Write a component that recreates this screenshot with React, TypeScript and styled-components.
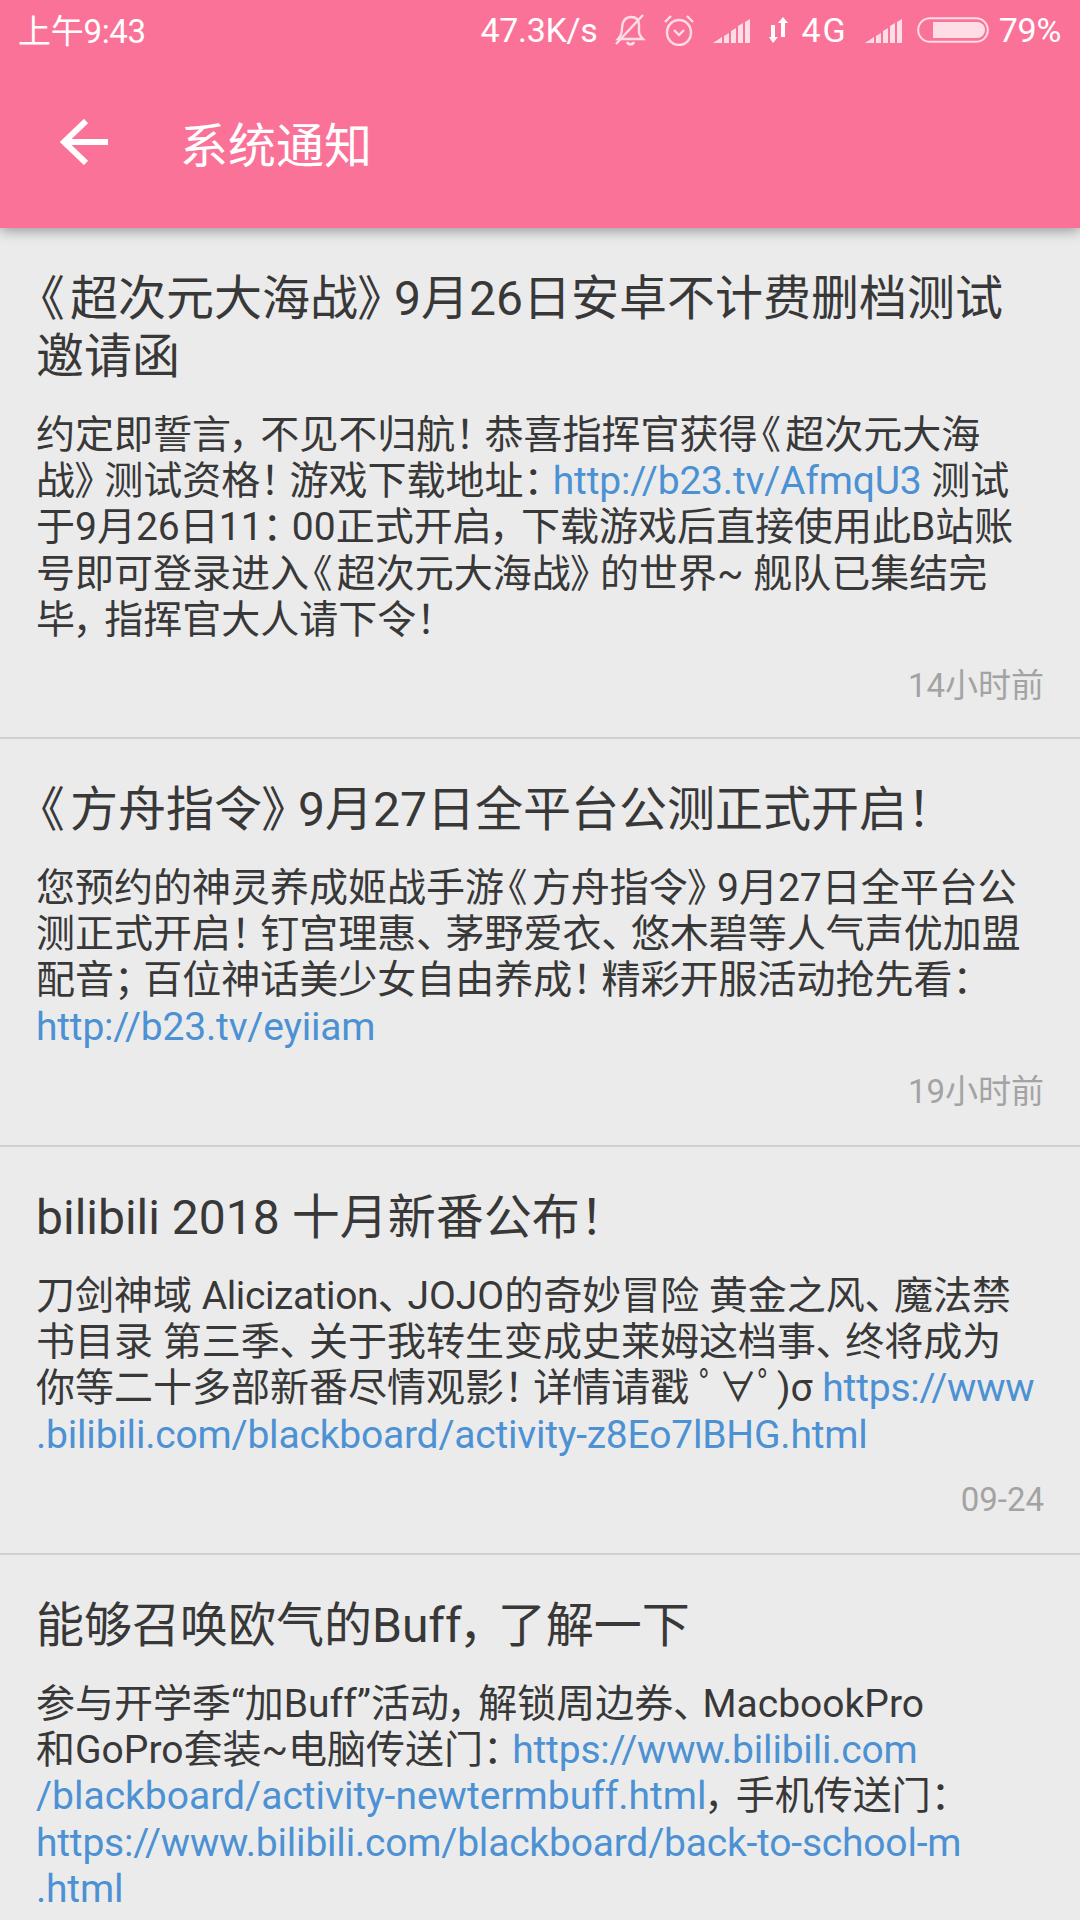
import React from 'react';
import styled, { createGlobalStyle } from 'styled-components';

const GlobalStyle = createGlobalStyle`
  html, body {
    margin: 0;
    padding: 0;
    background: #ebebeb;
  }
  body {
    font-family: Roboto, "Noto Sans CJK SC", sans-serif;
    font-feature-settings: "palt";
    overflow: hidden;
  }
`

const Page = styled.div`
  width: 1080px;
  height: 1920px;
  overflow: hidden;
  background: #ebebeb;
`

const Header = styled.header`
  position: relative;
  z-index: 1;
  height: 228px;
  background: #fb7299;
  box-shadow: 0 3px 12px rgba(0, 0, 0, 0.35);
  color: #fff;
`

const StatusBar = styled.div`
  height: 60px;
  padding: 0 19px 0 18px;
  display: flex;
  align-items: center;
  justify-content: space-between;
  font-size: 34px;
  letter-spacing: -0.3px;
`

const StatusTime = styled.span`
  font-size: 33px;
  margin-top: -2px;
`

const StatusRight = styled.div`
  display: flex;
  align-items: center;
`

const StatusText = styled.span<{ $left?: number; $spacing?: number }>`
  margin-left: ${p => p.$left || 0}px;
  letter-spacing: ${p => p.$spacing ?? -0.3}px;
  white-space: nowrap;
`

const StatusIcon = styled.svg<{ $left?: number }>`
  display: block;
  margin-left: ${p => p.$left || 0}px;
`

const AppBar = styled.div`
  height: 168px;
  display: flex;
  align-items: center;
  padding: 0 0 4px 60px;
  box-sizing: border-box;
`

const PageTitle = styled.div`
  margin-left: 72px;
  font-size: 48px;
`

const Item = styled.article`
  height: ${(p: { $height: number }) => p.$height}px;
  box-sizing: border-box;
  padding: 41.500px 36px 0;
  border-bottom: 2px solid #d0d0d0;
  overflow: hidden;
`

const ItemTitle = styled.h2`
  margin: 0 0 26px;
  font-size: 48px;
  line-height: 58px;
  font-weight: 400;
  color: #383838;
  white-space: nowrap;
`

const ItemBody = styled.p`
  margin: 0;
  font-size: 39px;
  line-height: 46.400px;
  color: #383838;
  white-space: nowrap;
`

const Link = styled.span<{ $wide?: boolean }>`
  color: #4c91d3;
  letter-spacing: ${p => (p.$wide ? 0 : -0.2)}px;
`

const Tight = styled.span`
  letter-spacing: -0.4px;
`

// punctuation is a bit wider than the tight proportional form
const Punct = styled.span<{ $open?: boolean }>`
  margin-left: ${p => (p.$open ? 0.08 : 0)}em;
  margin-right: ${p => (p.$open ? 0.13 : 0.25)}em;
`

const ItemTime = styled.div`
  margin-top: 22px;
  text-align: right;
  font-size: 33px;
  line-height: 40px;
  color: #a3a3a3;
`

const BackIcon = () => (
  <svg width="48" height="46" viewBox="0 0 48 46" fill="none" stroke="#fff" strokeWidth="6">
    <path d="M48 23H4" />
    <path d="M26 2L4 23l22 21" />
  </svg>
)

const Signal = ({ left }: { left: number }) => (
  <StatusIcon $left={left} width="37" height="25" viewBox="0 0 37 25" fill="#ffdde6">
    <path d="M0 25l9-6v6zM11 18l5-3v10h-5zM18 13l5-3v15h-5zM25 8l5-3v20h-5zM32 4l5-3v24h-5z" />
  </StatusIcon>
)

export default function App() {
  return (
    <Page lang="zh-CN">
      <GlobalStyle />
      <Header>
        <StatusBar>
          <StatusTime>上午9:43</StatusTime>
          <StatusRight>
            <StatusText>47.3K/s</StatusText>
            <StatusIcon $left={18} width="31" height="32" viewBox="0 0 31 32" fill="none" stroke="#ffdde6" strokeWidth="2.400">
              <path d="M3 25c3-3 4-6 4-11 0-6 3-11 9-11 5 0 8 3 8 8v7c0 3 2 5 4 7H3z" />
              <path d="M12 28c1 3 6 3 7 0" />
              <path d="M1 30L28 1" />
            </StatusIcon>
            <StatusIcon $left={18} width="30" height="32" viewBox="0 0 30 32" fill="none" stroke="#ffdde6" strokeWidth="2.400">
              <ellipse cx="15" cy="18.500" rx="12" ry="12.500" />
              <path d="M10 16l5 5 5-5" />
              <path d="M1 8l6-6M29 8l-6-6" />
            </StatusIcon>
            <Signal left={19} />
            <StatusIcon $left={19} width="20" height="26" viewBox="0 0 20 26" fill="#fff">
              <path d="M2 8h4v12h3l-5 6-4-6h2zM12 20V6H9l5-6 5 6h-3v14z" />
            </StatusIcon>
            <StatusText $left={12} $spacing={2}>4G</StatusText>
            <Signal left={17} />
            <StatusIcon $left={15} width="72" height="26" viewBox="0 0 72 26" fill="none">
              <rect x="1.200" y="1.200" width="69.600" height="23.600" rx="11.800" stroke="#ffdde6" strokeWidth="2" />
              <path d="M16 5h44a8 8 0 0 1 0 16H16z" fill="#ffdde6" />
            </StatusIcon>
            <StatusText $left={10}>79%</StatusText>
          </StatusRight>
        </StatusBar>
        <AppBar>
          <BackIcon />
          <PageTitle>系统通知</PageTitle>
        </AppBar>
      </Header>

      <Item $height={511}>
        <ItemTitle><Punct $open>《</Punct>超次元大海战<Punct>》</Punct>9月26日安卓不计费删档测试<br />邀请函</ItemTitle>
        <ItemBody>
          约定即誓言<Punct>，</Punct>不见不归航<Punct>！</Punct>恭喜指挥官获得<Punct $open>《</Punct>超次元大海<br />
          战<Punct>》</Punct>测试资格<Punct>！</Punct>游戏下载地址<Punct>：</Punct><Link>http://b23.tv/AfmqU3</Link> 测试<br />
          于9月26日11<Punct>：</Punct>00正式开启<Punct>，</Punct>下载游戏后直接使用此B站账<br />
          号即可登录进入<Punct $open>《</Punct>超次元大海战<Punct>》</Punct>的世界~ 舰队已集结完<br />
          毕<Punct>，</Punct>指挥官大人请下令<Punct>！</Punct>
        </ItemBody>
        <ItemTime>14小时前</ItemTime>
      </Item>

      <Item $height={408}>
        <ItemTitle><Punct $open>《</Punct>方舟指令<Punct>》</Punct>9月27日全平台公测正式开启<Punct>！</Punct></ItemTitle>
        <ItemBody>
          您预约的神灵养成姬战手游<Punct $open>《</Punct>方舟指令<Punct>》</Punct>9月27日全平台公<br />
          测正式开启<Punct>！</Punct>钉宫理惠<Punct>、</Punct>茅野爱衣<Punct>、</Punct>悠木碧等人气声优加盟<br />
          配音<Punct>；</Punct>百位神话美少女自由养成<Punct>！</Punct>精彩开服活动抢先看<Punct>：</Punct><br />
          <Link>http://b23.tv/eyiiam</Link>
        </ItemBody>
        <ItemTime>19小时前</ItemTime>
      </Item>

      <Item $height={408}>
        <ItemTitle>bilibili 2018 十月新番公布<Punct>！</Punct></ItemTitle>
        <ItemBody>
          刀剑神域 <Tight>Alicization</Tight><Punct>、</Punct>JOJO的奇妙冒险 黄金之风<Punct>、</Punct>魔法禁<br />
          书目录 第三季<Punct>、</Punct>关于我转生变成史莱姆这档事<Punct>、</Punct>终将成为<br />
          你等二十多部新番尽情观影<Punct>！</Punct>详情请戳 ﾟ∀ﾟ)σ <Link>https://www</Link><br />
          <Link>.bilibili.com/blackboard/activity-z8Eo7lBHG.html</Link>
        </ItemBody>
        <ItemTime>09-24</ItemTime>
      </Item>

      <Item $height={408}>
        <ItemTitle>能够召唤欧气的Buff<Punct>，</Punct>了解一下</ItemTitle>
        <ItemBody>
          参与开学季“加Buff”活动<Punct>，</Punct>解锁周边券<Punct>、</Punct>MacbookPro<br />
          和GoPro套装~电脑传送门<Punct>：</Punct><Link>https://www.bilibili.com</Link><br />
          <Link $wide>/blackboard/activity-newtermbuff.html</Link><Punct>，</Punct>手机传送门<Punct>：</Punct><br />
          <Link>https://www.bilibili.com/blackboard/back-to-school-m</Link><br />
          <Link>.html</Link>
        </ItemBody>
      </Item>
    </Page>
  )
}
